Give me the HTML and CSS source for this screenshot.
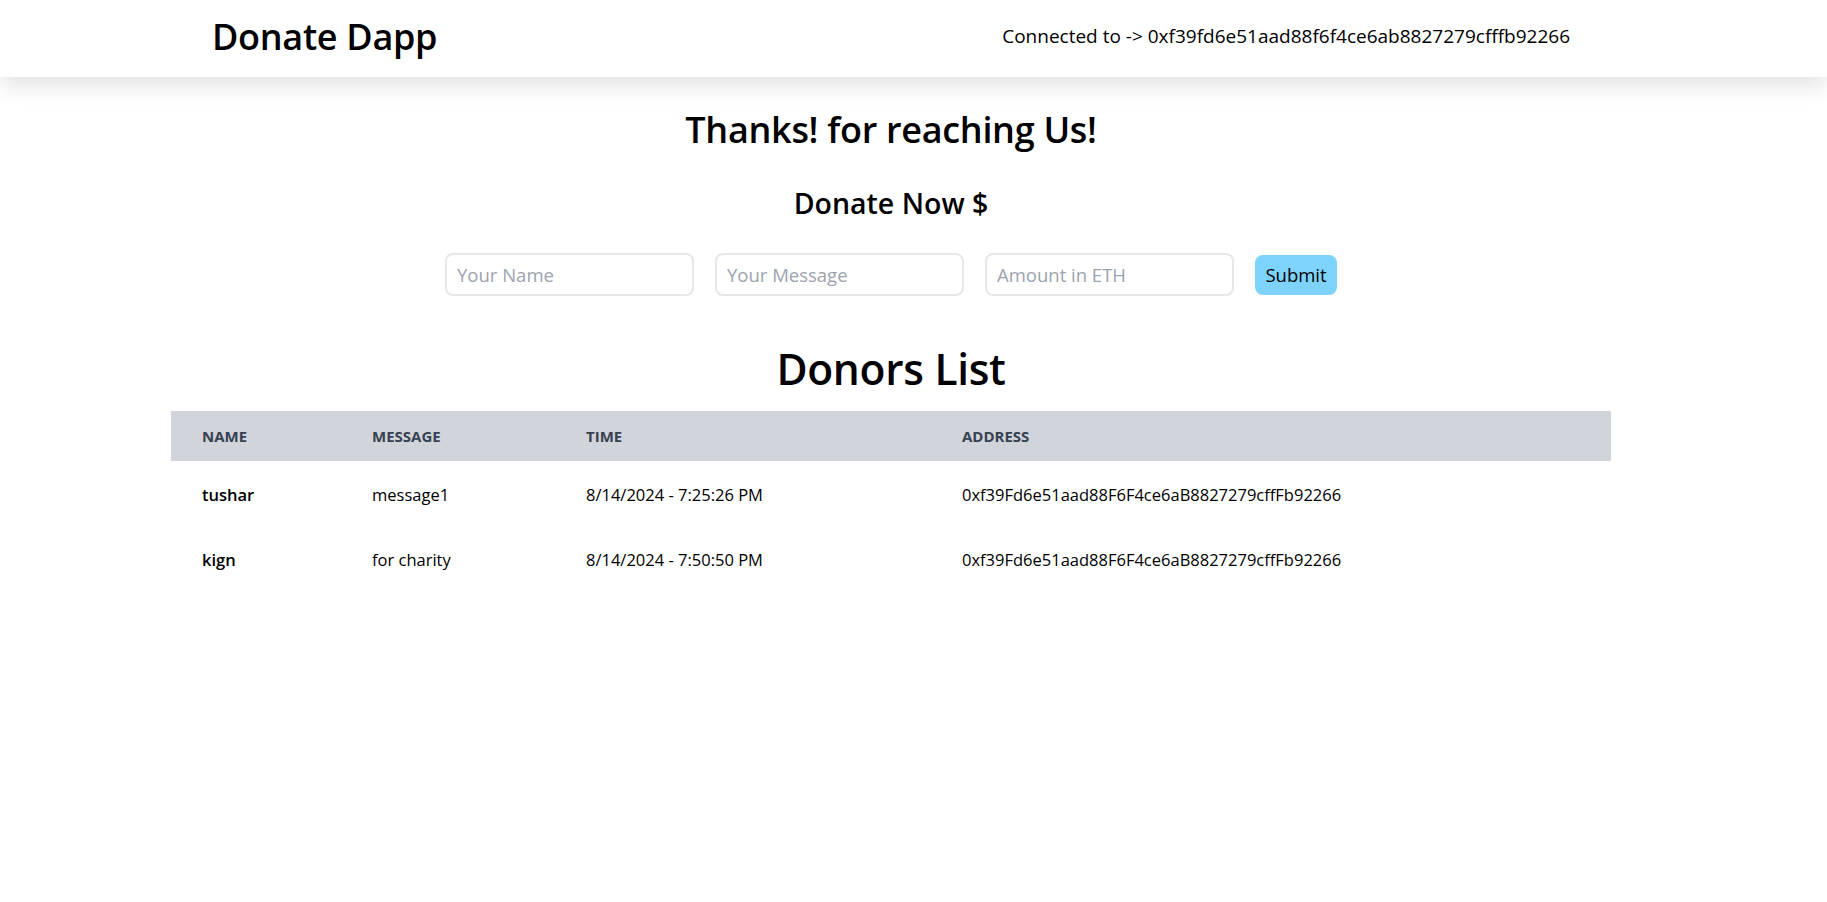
FILE: index.html
```html
<!DOCTYPE html>
<html lang="en">
<head>
<meta charset="utf-8">
<title>Donate Dapp</title>
<link rel="stylesheet" href="styles.css">
</head>
<body>
<header class="topbar">
  <div class="topbar-inner">
    <div class="brand">Donate Dapp</div>
    <div class="account">Connected to -&gt; 0xf39fd6e51aad88f6f4ce6ab8827279cfffb92266</div>
  </div>
</header>
<main class="main">
  <h1 class="title">Thanks! for reaching Us!</h1>
  <h2 class="subtitle">Donate Now $</h2>
  <form class="donate-form">
    <input class="field" type="text" placeholder="Your Name">
    <input class="field" type="text" placeholder="Your Message">
    <input class="field" type="text" placeholder="Amount in ETH">
    <button class="submit" type="button">Submit</button>
  </form>
  <h2 class="list-title">Donors List</h2>
  <table class="donors">
    <thead>
      <tr>
        <th class="col-name">Name</th>
        <th class="col-msg">Message</th>
        <th class="col-time">Time</th>
        <th class="col-addr">Address</th>
      </tr>
    </thead>
    <tbody>
      <tr>
        <td class="donor-name">tushar</td>
        <td>message1</td>
        <td>8/14/2024 - 7:25:26 PM</td>
        <td>0xf39Fd6e51aad88F6F4ce6aB8827279cffFb92266</td>
      </tr>
      <tr>
        <td class="donor-name">kign</td>
        <td>for charity</td>
        <td>8/14/2024 - 7:50:50 PM</td>
        <td>0xf39Fd6e51aad88F6F4ce6aB8827279cffFb92266</td>
      </tr>
    </tbody>
  </table>
</main>
</body>
</html>
```
FILE: styles.css
```css
* { box-sizing: border-box; }

html, body {
  margin: 0;
  padding: 0;
  background: #ffffff;
}

body {
  font-family: "Open Sans", "Noto Sans", sans-serif;
  color: #000000;
}

.topbar {
  height: 77px;
  background: #ffffff;
  box-shadow: 0 8px 22px rgba(0, 0, 0, 0.12);
  padding-right: 45px;
  position: relative;
  z-index: 1;
}

.topbar-inner {
  max-width: 1358px;
  height: 100%;
  margin: 0 auto;
  display: flex;
  align-items: center;
  justify-content: space-between;
}

.brand {
  font-size: 36px;
  font-weight: 600;
  letter-spacing: -0.3px;
  line-height: 1;
  margin-top: -4px;
}

.account {
  font-size: 19px;
  line-height: 1;
  margin-top: -5px;
}

.main {
  padding-right: 45px;
  display: flex;
  flex-direction: column;
  align-items: center;
}

.title {
  margin: 27px 0 0;
  font-size: 36px;
  line-height: 52px;
  font-weight: 600;
  letter-spacing: -0.3px;
}

.subtitle {
  margin: 29px 0 0;
  font-size: 28.5px;
  line-height: 36px;
  font-weight: 600;
}

.donate-form {
  margin-top: 32px;
  display: flex;
  align-items: center;
  gap: 21px;
}

.field {
  width: 249px;
  height: 43px;
  border: 2px solid #e5e7eb;
  border-radius: 8px;
  padding: 0 10px;
  font-family: inherit;
  font-size: 18.5px;
  color: #000;
  outline: none;
}

.field::placeholder {
  color: #9ca3af;
}

.submit {
  width: 82px;
  height: 40px;
  border: none;
  border-radius: 8px;
  background: #7dd3fc;
  font-family: inherit;
  font-size: 18.5px;
  color: #000;
  padding: 0;
}

.list-title {
  margin: 45px 0 0;
  font-size: 42.5px;
  line-height: 56px;
  font-weight: 600;
  letter-spacing: -0.3px;
}

.donors {
  margin-top: 14px;
  width: 1440px;
  border-collapse: collapse;
  table-layout: fixed;
}

.donors thead tr {
  background: #d1d5db;
  height: 50px;
}

.donors th {
  text-align: left;
  text-transform: uppercase;
  font-size: 15px;
  font-weight: 700;
  color: #374151;
  padding: 0 0 0 31px;
  line-height: 20px;
}

.col-name { width: 170px; }
.col-msg { width: 214px; }
.col-time { width: 376px; }
.col-addr { width: 680px; }

.donors td {
  font-size: 16.5px;
  line-height: 22px;
  padding: 23px 0 19.5px 31px;
  white-space: nowrap;
  color: #000;
}

.donors td.donor-name {
  font-weight: 600;
}
```
